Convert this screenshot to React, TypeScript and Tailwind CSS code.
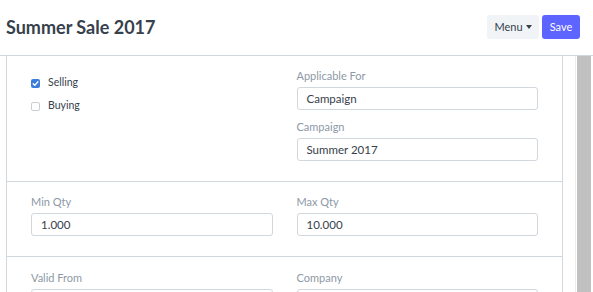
function Field({ label, value }: { label: string; value?: string }) {
    return (
        <div className="flex flex-col">
            <label className="text-[11px] leading-[14px] text-[#8d99a6] mb-1">{label}</label>
            <div className="h-[23px] flex items-center px-[9px] border border-[#d1d8dd] rounded-[3px] bg-white text-[11.5px] text-[#36414c]">
                {value}
            </div>
        </div>
    )
}

function Check({ label, checked }: { label: string; checked?: boolean }) {
    return (
        <div className="h-[14px] flex items-center gap-2">
            {checked ? (
                <span className="w-[9px] h-[9px] rounded-[2px] bg-[#3b7ddd] flex items-center justify-center">
                    <svg width="7" height="7" viewBox="0 0 8 8" fill="none">
                        <path d="M1.3 4.2 3.2 6 6.8 2" stroke="white" strokeWidth="1.5" strokeLinecap="round" strokeLinejoin="round" />
                    </svg>
                </span>
            ) : (
                <span className="w-[9px] h-[9px] rounded-[2px] border border-[#c8d0d6] bg-white" />
            )}
            <span className="text-[10.5px] text-[#36414c]">{label}</span>
        </div>
    )
}

export default function App() {
    return (
        <div className="w-[593px] h-[292px] overflow-hidden bg-white font-['Lato',sans-serif]">
            <div className="h-[56px] border-b border-[#d1d8dd] flex items-center justify-between pl-[6px] pr-[13px]">
                <h1 className="text-[18px] font-bold text-[#36414c]">Summer Sale 2017</h1>
                <div className="flex items-center gap-[3px] -mt-[1px]">
                    <button className="h-6 w-[52px] rounded-[3px] bg-[#f0f4f7] text-[11px] text-[#36414c] flex items-center justify-center gap-[3px]">
                        Menu
                        <span className="w-0 h-0 border-l-[3.5px] border-r-[3.5px] border-t-[4px] border-l-transparent border-r-transparent border-t-[#36414c]" />
                    </button>
                    <button className="h-6 w-[38px] rounded-[3px] bg-[#5e64ff] text-[11px] text-white">Save</button>
                </div>
            </div>

            <div className="flex h-[236px]">
                <div className="ml-[6px] w-[557px] border-x border-[#d1d8dd]">
                    <div className="grid grid-cols-2 gap-6 px-6 pt-[13px] pb-5 border-b border-[#d1d8dd]">
                        <div className="flex flex-col gap-[9px] mt-[7px]">
                            <Check label="Selling" checked />
                            <Check label="Buying" />
                        </div>
                        <div className="flex flex-col gap-[10px]">
                            <Field label="Applicable For" value="Campaign" />
                            <Field label="Campaign" value="Summer 2017" />
                        </div>
                    </div>

                    <div className="grid grid-cols-2 gap-6 px-6 pt-[13px] pb-5 border-b border-[#d1d8dd]">
                        <Field label="Min Qty" value="1.000" />
                        <Field label="Max Qty" value="10.000" />
                    </div>

                    <div className="grid grid-cols-2 gap-6 px-6 pt-[14px] pb-5">
                        <Field label="Valid From" />
                        <Field label="Company" />
                    </div>
                </div>

                <div className="ml-[12px] w-[18px] border-l border-[#ececec] bg-white">
                    <div className="ml-[1px] w-[14px] h-full bg-[#c1c1c1]" />
                </div>
            </div>
        </div>
    )
}
